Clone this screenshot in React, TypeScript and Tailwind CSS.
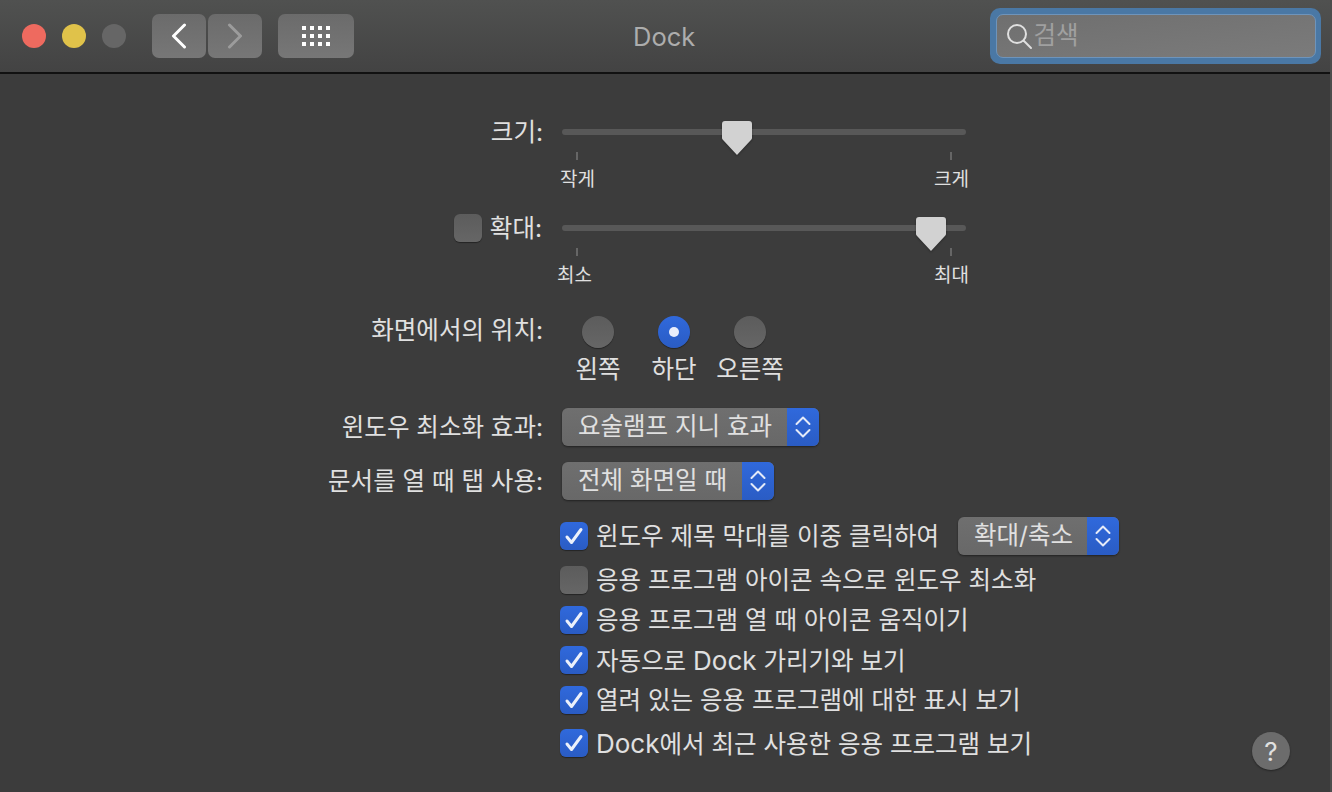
import React from "react";

function Chevrons() {
  return (
    <svg width="16" height="26" viewBox="0 0 16 26" fill="none" stroke="#e4eaf8" strokeWidth="2" strokeLinecap="round" strokeLinejoin="round">
      <path d="M1.5 10 8 3.5 14.5 10" />
      <path d="M1.5 16 8 22.5 14.5 16" />
    </svg>
  );
}

function Select({ text, w }: { text: string; w: string }) {
  return (
    <div className={`flex h-[38px] ${w} overflow-hidden rounded-[6px] bg-gradient-to-b from-[#6f6f6f] to-[#686868] shadow-[0_1px_2px_rgba(0,0,0,0.45)]`}>
      <div className="flex-1 pl-[16px] text-[24.5px] leading-[36px] text-[#e0e0e0] whitespace-nowrap">{text}</div>
      <div className="flex w-[32px] items-center justify-center bg-gradient-to-b from-[#3069dc] to-[#2a5cc4]">
        <Chevrons />
      </div>
    </div>
  );
}

function Check({ on }: { on?: boolean }) {
  if (!on)
    return <div className="h-[28px] w-[28px] shrink-0 rounded-[6px] bg-gradient-to-b from-[#5c5c5c] to-[#666666] shadow-[0_1px_1px_rgba(0,0,0,0.4)]" />;
  return (
    <div className="flex h-[28px] w-[28px] shrink-0 items-center justify-center rounded-[6px] bg-gradient-to-b from-[#3069dc] to-[#2a5cc4] shadow-[0_1px_1px_rgba(0,0,0,0.4)]">
      <svg width="20" height="20" viewBox="0 0 20 20" fill="none" stroke="#ecf1fb" strokeWidth="3" strokeLinecap="round" strokeLinejoin="round">
        <path d="M3 11l4.5 5.5L17 3.5" />
      </svg>
    </div>
  );
}

function Thumb() {
  return (
    <svg width="30" height="34" viewBox="0 0 30 34" className="drop-shadow-[0_1px_1px_rgba(0,0,0,0.3)]">
      <path d="M3 0h24a3 3 0 0 1 3 3v14a2 2 0 0 1-.6 1.4L15 34 .6 18.4A2 2 0 0 1 0 17V3a3 3 0 0 1 3-3z" fill="#d2d2d2" />
    </svg>
  );
}

function Slider({ thumb, left, right, labelClass }: { thumb: string; left: string; right: string; labelClass: string }) {
  return (
    <div className="w-[404px]">
      <div className="relative flex h-[28px] items-center">
        <div className="h-[6px] w-full rounded-full bg-[#585858]" />
        <div className={`absolute top-[3px] ${thumb}`}>
          <Thumb />
        </div>
      </div>
      <div className="mt-[6px] flex h-[8px] justify-between px-[14px]">
        <div className="w-[2px] bg-[#666666]" />
        <div className="w-[2px] bg-[#666666]" />
      </div>
      <div className={`mt-[8px] flex justify-between text-[19px] leading-[24px] text-[#e0e0e0] ${labelClass}`}>
        <span>{left}</span>
        <span>{right}</span>
      </div>
    </div>
  );
}

function Row({ label, className, labelClass, children, extra }: { label: string; className?: string; labelClass?: string; children: React.ReactNode; extra?: React.ReactNode }) {
  return (
    <div className={`flex ${className ?? ""}`}>
      <div className={`flex h-[28px] w-[543px] shrink-0 items-center justify-end gap-[8px] whitespace-nowrap text-[24.5px] text-[#e0e0e0] ${labelClass ?? ""}`}>
        {extra}
        <span>{label}</span>
      </div>
      <div className="ml-[19px]">{children}</div>
    </div>
  );
}

function Radio({ on, label }: { on?: boolean; label: string }) {
  return (
    <div className="flex flex-col items-center">
      {on ? (
        <div className="flex h-[32px] w-[32px] items-center justify-center rounded-full bg-gradient-to-b from-[#3069dc] to-[#2a5cc4] shadow-[0_1px_1px_rgba(0,0,0,0.4)]">
          <div className="h-[10px] w-[10px] rounded-full bg-[#e8edfb]" />
        </div>
      ) : (
        <div className="h-[32px] w-[32px] rounded-full bg-gradient-to-b from-[#5c5c5c] to-[#666666] shadow-[0_1px_1px_rgba(0,0,0,0.4)]" />
      )}
      <div className="mt-[7px] whitespace-nowrap text-[24.5px] leading-[28px] text-[#e0e0e0]">{label}</div>
    </div>
  );
}

function CheckRow({ on, children, className }: { on?: boolean; children: React.ReactNode; className: string }) {
  return (
    <div className={`flex h-[28px] items-center gap-[8px] ${className}`}>
      <Check on={on} />
      <span className="whitespace-nowrap text-[24.5px] text-[#e0e0e0]">{children}</span>
    </div>
  );
}

function NavBtn({ w, children }: { w: string; children: React.ReactNode }) {
  return (
    <div className={`flex h-[44px] ${w} items-center justify-center rounded-[7px] bg-gradient-to-b from-[#6b6b6b] to-[#777777]`}>
      {children}
    </div>
  );
}

export default function App() {
  return (
    <div
      className="h-[792px] w-[1332px] overflow-hidden border-r-2 border-[#4c4c4c] bg-[#3c3c3c]"
      style={{ fontFamily: '"Inter", "Noto Sans CJK KR", sans-serif' }}
    >
      <header className="relative flex h-[74px] items-center border-b-[2px] border-[#111111] bg-gradient-to-b from-[#505150] to-[#434343]">
        <div className="ml-[22px] flex gap-[16px]">
          <div className="h-[24px] w-[24px] rounded-full bg-[#ee6a5f]" />
          <div className="h-[24px] w-[24px] rounded-full bg-[#e0c24a]" />
          <div className="h-[24px] w-[24px] rounded-full bg-[#666666]" />
        </div>
        <div className="ml-[26px] flex gap-[2px]">
          <NavBtn w="w-[54px]">
            <svg width="16" height="26" viewBox="0 0 16 26" fill="none" stroke="#ffffff" strokeWidth="3" strokeLinecap="round" strokeLinejoin="round">
              <path d="M13.5 2 2.5 13l11 11" />
            </svg>
          </NavBtn>
          <NavBtn w="w-[54px]">
            <svg width="16" height="26" viewBox="0 0 16 26" fill="none" stroke="#9c9c9c" strokeWidth="3" strokeLinecap="round" strokeLinejoin="round">
              <path d="M2.5 2l11 11-11 11" />
            </svg>
          </NavBtn>
        </div>
        <div className="ml-[16px]">
          <NavBtn w="w-[76px]">
            <svg width="28" height="20" viewBox="0 0 28 20" fill="#ffffff">
              {[0, 8, 16].map((y) =>
                [0, 8, 16, 24].map((x) => <rect key={`${x}-${y}`} x={x} y={y} width="4" height="4" />)
              )}
            </svg>
          </NavBtn>
        </div>
        <div className="flex-1 pl-[279px] pt-[2px] text-[25.5px] text-[#adadad]">Dock</div>
        <div className="mr-[9px] flex h-[56px] w-[331px] items-center justify-center rounded-[10px] bg-[#4a78a5]">
          <div className="flex h-[44px] w-[320px] items-center rounded-[7px] border border-[#6e94bb] bg-gradient-to-br from-[#6f6f6f] to-[#7b7b7b] pl-[10px]">
            <svg width="26" height="26" viewBox="0 0 26 26" fill="none" stroke="#e0e0e0" strokeWidth="2" strokeLinecap="round" className="mt-[2px]">
              <circle cx="10" cy="10" r="9" />
              <path d="M16.5 16.5 24 24" />
            </svg>
            <span className="ml-[1px] -mt-[2px] text-[24.5px] text-[#a0a0a0]">검색</span>
          </div>
        </div>
      </header>

      <main className="pt-[44px]">
        <Row label="크기:">
          <Slider thumb="left-[160px]" left="작게" right="크게" labelClass="-ml-[2px] -mr-[3px]" />
        </Row>
        <Row label="확대:" className="mt-[22px]" labelClass="pr-[1px]" extra={<Check />}>
          <Slider thumb="left-[354px]" left="최소" right="최대" labelClass="-ml-[5px] -mr-[3px]" />
        </Row>
        <Row label="화면에서의 위치:" className="mt-[28px]">
          <div className="-ml-[2px] grid w-[228px] grid-cols-3">
            <Radio label="왼쪽" />
            <Radio on label="하단" />
            <Radio label="오른쪽" />
          </div>
        </Row>
        <Row label="윈도우 최소화 효과:" className="mt-[25px] items-center">
          <Select text="요술램프 지니 효과" w="w-[257px]" />
        </Row>
        <Row label="문서를 열 때 탭 사용:" className="mt-[16px] items-center">
          <Select text="전체 화면일 때" w="w-[212px]" />
        </Row>
        <div className="ml-[560px]">
          <div className="mt-[17px] flex h-[38px] items-center">
            <CheckRow on className="w-[398px]">윈도우 제목 막대를 이중 클릭하여</CheckRow>
            <Select text="확대/축소" w="w-[161px]" />
          </div>
          <CheckRow className="mt-[11px]">응용 프로그램 아이콘 속으로 윈도우 최소화</CheckRow>
          <CheckRow on className="mt-[12px]">응용 프로그램 열 때 아이콘 움직이기</CheckRow>
          <CheckRow on className="mt-[12px]">
            자동으로 <span className="text-[26px]">Dock</span> 가리기와 보기
          </CheckRow>
          <CheckRow on className="mt-[12px]">열려 있는 응용 프로그램에 대한 표시 보기</CheckRow>
          <div className="mt-[15px] flex items-start">
            <CheckRow on className="w-[692px]">
              <span className="text-[26px]">Dock</span>에서 최근 사용한 응용 프로그램 보기
            </CheckRow>
            <div className="mt-[3px] flex h-[38px] w-[38px] items-center justify-center rounded-full bg-[#6c6c6c] text-[26px] text-[#e0e0e0] shadow-[0_1px_2px_rgba(0,0,0,0.4)]">
              ?
            </div>
          </div>
        </div>
      </main>
    </div>
  );
}
